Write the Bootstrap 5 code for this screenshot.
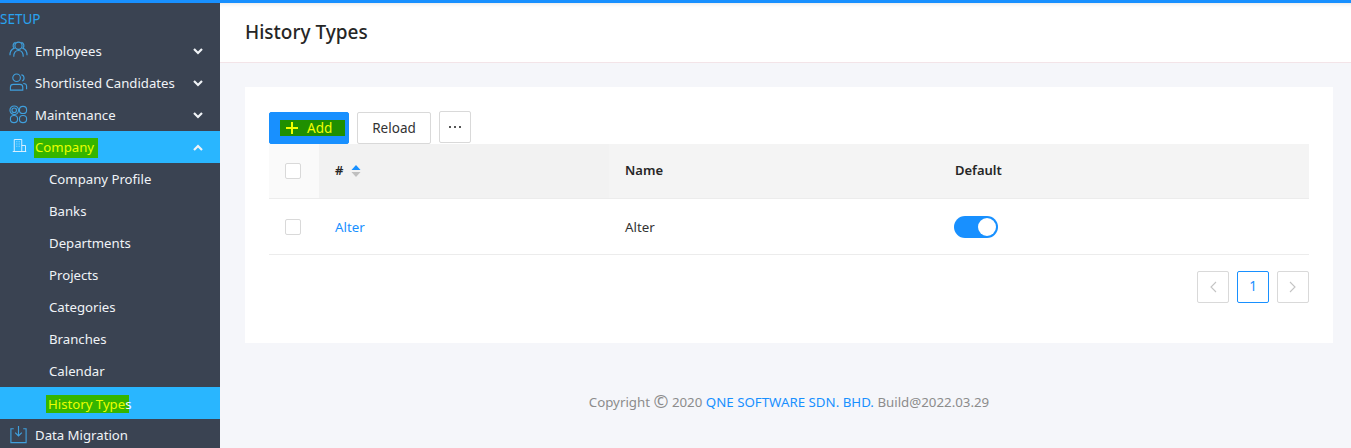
<!DOCTYPE html>
<html lang="en">
<head>
<meta charset="utf-8">
<title>History Types</title>
<link rel="stylesheet" href="https://cdn.jsdelivr.net/npm/bootstrap@5.3.0/dist/css/bootstrap.min.css">
<style>
html,body{height:448px;overflow:hidden}
body{font-family:"Noto Sans","Open Sans","Liberation Sans",sans-serif;font-size:14px;background:#f5f6fa;color:#262626}
.topline{height:3px;background:#1890ff}
.shell{height:445px;overflow:hidden}
.side{width:220px;background:#3a4352;color:#f0f3f7;flex:none;overflow:hidden}
.side-label{height:32px;line-height:32px;color:#29a3f0;font-size:13.5px}
.side-item{height:32px;padding:2px 17px 0 35px;position:relative;white-space:nowrap;font-size:13.2px}
.side-sub{padding-left:49px}
.side-on{background:#29b6ff}
.side-ico{position:absolute;left:9px;top:6px;width:19px;height:19px;fill:none;stroke:#3f9fdc;stroke-width:1.2}
.side-on .side-ico{stroke:#e8f4ff;left:12px;top:7px;width:15px;height:15px}
.chev{width:10px;height:7px;fill:none;stroke:#f0f3f7;stroke-width:2.2;margin-top:-2px}
.hl{background:#35b500;color:#eaff00;padding:0 4px 1px 1px;margin-left:-1px}
.hl-hist{padding:0 0 0 2px;margin-left:-3px;line-height:18px}
.hl-end{color:#f4fbff;line-height:18px;background:linear-gradient(to right,#35b500 55%,transparent 55%)}
.main-col{min-width:0}
.page-head{height:60px;background:#fff;border-bottom:1px solid #f3e4e8;padding:0 25px;box-shadow:inset 0 5px 5px -5px rgba(0,0,0,.15)}
.page-head h1{font-size:19px;font-weight:500;color:#262626;margin:0}
.panel-box{margin:24px 18px 0 25px;background:#fff;height:256px;padding:25px 24px 24px}
.bar{height:32px;gap:8px}
.btn-flat{height:32px;border-radius:2px;font-size:13.5px;padding:0;border:1px solid #d9d9d9;background:#fff;color:#333;--bs-btn-hover-bg:#fff}
.btn-add{width:80px;background:#1890ff;border-color:#1890ff;color:#fff;padding-left:10px}
.btn-add .hl-add{background:#1f8f00;color:#f2ff00;width:65px;height:16px;gap:9px;padding-left:6px}
.btn-reload{width:74px}
.btn-more{width:32px;margin-top:-1px}
.btn-more svg{display:block;margin:auto}
.grid-t{margin:0;--bs-table-bg:transparent;font-size:13.3px;table-layout:fixed;width:1040px}
.grid-t th{font-weight:600;height:54px;background:#f4f4f4;padding:0 16px;vertical-align:middle;border-bottom:1px solid #ececec;color:#262626;font-size:13px}
.grid-t td{height:56px;padding:2px 16px 0;vertical-align:middle;border-bottom:1px solid #ececec;color:#333}
.grid-t td.txt-cell{padding-top:4px}
.grid-t th.col-check{background:#fafafa}
.col-check{width:50px}
.grid-t th.col-num{background:#f2f2f2;width:290px}
.col-name{width:330px}
.box-check{display:block;width:16px;height:16px;border:1px solid #d9d9d9;border-radius:2px;background:#fff}
.alter-link{color:#1890ff;text-decoration:none}
.sorter{width:10px;height:14px;margin-left:4px}
.toggle{display:block;width:44px;height:22px;border-radius:11px;background:#1890ff;padding:2px 2px 2px 24px;margin-left:-1px}
.toggle i{display:block;width:18px;height:18px;border-radius:50%;background:#fff}
.pager{gap:8px;margin-top:16px}
.pg{width:32px;height:32px;border:1px solid #d9d9d9;border-radius:2px;color:#1890ff;font-size:13.5px}
.pg-on{border-color:#1890ff}
.pg svg{width:10px;height:12px;fill:none;stroke:#c4c4c4;stroke-width:1.1}
.foot{font-size:13.3px;color:#8c8c8c;margin:49px 18px 0 25px;text-align:center}
.foot a{color:#1890ff;text-decoration:none}
.copy-ic{font-size:18px;line-height:1;vertical-align:-1px}
</style>
</head>
<body>
<div class="topline"></div>
<div class="shell d-flex">
  <nav class="side">
    <div class="side-label">SETUP</div>
    <div class="side-item d-flex align-items-center justify-content-between">
      <svg class="side-ico" viewBox="0 0 20 20"><circle cx="10" cy="5" r="3.800"/><path d="M1 15c0-4 2-6.500 4.500-7.500C3.500 6 4 2 7 1.500M19 15c0-4-2-6.500-4.500-7.500C16.500 6 16 2 13 1.500M5 16.500c0-4 2-6.500 5-6.500s5 2.500 5 6.500"/></svg>
      <span>Employees</span><svg class="chev" viewBox="0 0 10 7"><path d="M1 1l4 4 4-4"/></svg>
    </div>
    <div class="side-item d-flex align-items-center justify-content-between">
      <svg class="side-ico" viewBox="0 0 20 20"><circle cx="8" cy="5" r="4"/><path d="M1.500 18v-3c0-2 1.500-3 3-3h7c1.500 0 3 1 3 3v3zM13 2c3 0 4 5 1 6.500M15 11c2 0 3.500 1.500 3.500 3v3"/></svg>
      <span>Shortlisted Candidates</span><svg class="chev" viewBox="0 0 10 7"><path d="M1 1l4 4 4-4"/></svg>
    </div>
    <div class="side-item d-flex align-items-center justify-content-between">
      <svg class="side-ico" viewBox="0 0 20 20"><circle cx="5.500" cy="5.500" r="4.500"/><circle cx="5.500" cy="5.500" r="2.400"/><rect x="11" y="1.500" width="7.500" height="7.500" rx="3.500"/><rect x="1.500" y="11" width="7.500" height="7.500" rx="3.500"/><rect x="11" y="11" width="7.500" height="7.500" rx="3.500"/></svg>
      <span>Maintenance</span><svg class="chev" viewBox="0 0 10 7"><path d="M1 1l4 4 4-4"/></svg>
    </div>
    <div class="side-item side-on d-flex align-items-center justify-content-between">
      <svg class="side-ico" viewBox="0 0 20 20"><path d="M3 18V2h10v16M1 18h18M13 10h5v8M6 5h1M9 5h1M6 8h1M9 8h1M6 11h1M9 11h1"/></svg>
      <span class="hl">Company</span><svg class="chev" viewBox="0 0 10 7"><path d="M1 6l4-4 4 4"/></svg>
    </div>
    <div class="side-item side-sub d-flex align-items-center">Company Profile</div>
    <div class="side-item side-sub d-flex align-items-center">Banks</div>
    <div class="side-item side-sub d-flex align-items-center">Departments</div>
    <div class="side-item side-sub d-flex align-items-center">Projects</div>
    <div class="side-item side-sub d-flex align-items-center">Categories</div>
    <div class="side-item side-sub d-flex align-items-center">Branches</div>
    <div class="side-item side-sub d-flex align-items-center">Calendar</div>
    <div class="side-item side-sub side-on d-flex align-items-center"><span class="hl hl-hist">History Type</span><span class="hl-end">s</span></div>
    <div class="side-item d-flex align-items-center">
      <svg class="side-ico" viewBox="0 0 20 20"><path d="M5 4H2v14.500h16V4h-3M10 1v10M6.500 8l3.500 3.500L13.500 8"/></svg>
      <span>Data Migration</span>
    </div>
  </nav>
  <main class="main-col flex-grow-1">
    <header class="page-head d-flex align-items-center"><h1>History Types</h1></header>
    <section class="panel-box">
      <div class="bar d-flex">
        <button type="button" class="btn btn-flat btn-add d-flex align-items-center justify-content-start">
          <span class="hl-add d-flex align-items-center"><svg width="12" height="12" viewBox="0 0 12 12"><path d="M6 0v12M0 6h12" stroke="#f2ff00" stroke-width="2"/></svg><span>Add</span></span>
        </button>
        <button type="button" class="btn btn-flat btn-reload">Reload</button>
        <button type="button" class="btn btn-flat btn-more" aria-label="More"><svg width="12" height="2" viewBox="0 0 12 2"><path d="M0 0h2v2H0zM5 0h2v2H5zM10 0h2v2h-2z" fill="#555"/></svg></button>
      </div>
      <table class="table grid-t">
        <thead>
          <tr>
            <th class="col-check"><span class="box-check"></span></th>
            <th class="col-num"># <svg class="sorter" viewBox="0 0 10 14"><path d="M5 1l4.500 5h-9z" fill="#1890ff"/><path d="M5 13L.5 8h9z" fill="#bfbfbf"/></svg></th>
            <th class="col-name">Name</th>
            <th>Default</th>
          </tr>
        </thead>
        <tbody>
          <tr>
            <td><span class="box-check"></span></td>
            <td class="txt-cell"><a class="alter-link" href="#">Alter</a></td>
            <td class="txt-cell">Alter</td>
            <td><span class="toggle"><i></i></span></td>
          </tr>
        </tbody>
      </table>
      <div class="pager d-flex justify-content-end">
        <span class="pg d-flex align-items-center justify-content-center"><svg viewBox="0 0 10 12"><path d="M8 1L3 6l5 5"/></svg></span>
        <span class="pg pg-on d-flex align-items-center justify-content-center">1</span>
        <span class="pg d-flex align-items-center justify-content-center"><svg viewBox="0 0 10 12"><path d="M2 1l5 5-5 5"/></svg></span>
      </div>
    </section>
    <footer class="foot">Copyright <span class="copy-ic">©</span> 2020 <a href="#">QNE SOFTWARE SDN. BHD.</a> Build@2022.03.29</footer>
  </main>
</div>
</body>
</html>
